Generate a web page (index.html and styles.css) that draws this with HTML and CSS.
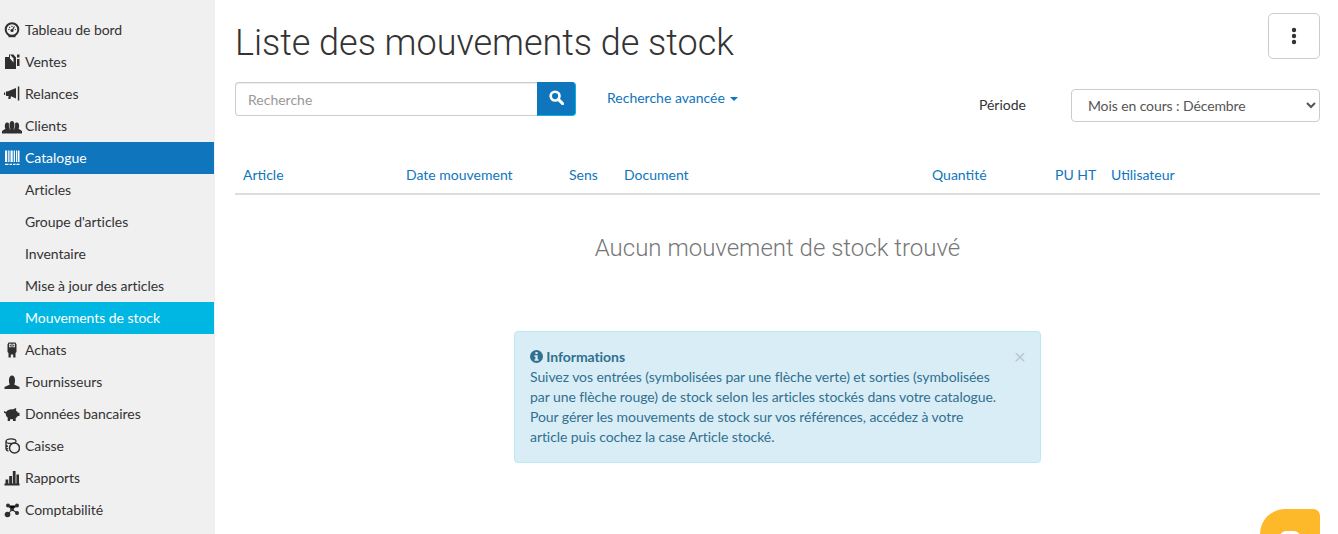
FILE: index.html
```html
<!DOCTYPE html>
<html lang="fr">
<head>
<meta charset="utf-8">
<title>Liste des mouvements de stock</title>
<link rel="stylesheet" href="styles.css">
</head>
<body>
<div class="app">
  <nav class="sidebar">
    <a class="nav-item"><svg class="ico" viewBox="0 0 16 16"><circle cx="8" cy="7.500" r="6.300" fill="none" stroke="currentColor" stroke-width="2"/><circle cx="8" cy="8.500" r="1.600" fill="currentColor"/><path d="M8 8.500l2.500-4M4.300 7.500h1.200M10.800 7.500h1M8 3.800v1.200M5.300 5l.8.8" stroke="currentColor" stroke-width="1.200" fill="none"/><path d="M4.500 13h7v2.200h-7z" fill="currentColor"/></svg>Tableau de bord</a>
    <a class="nav-item"><svg class="ico" viewBox="0 0 16 16"><path d="M1 3h4V0.500h4.500L12 3.500V15H1z" fill="currentColor"/><path d="M13 0.500h2.500v3H13zM13 5h2.500v7H13z" fill="currentColor"/><path d="M6 .5L9.500 4.500v4L6 4.500z" fill="#f0f0f0"/></svg>Ventes</a>
    <a class="nav-item"><svg class="ico" viewBox="0 0 16 16"><path d="M0 6.500h1.200v2.500H0zM2 5.500l2-.2 8-3.300v10.500l-5-2.200-.6 2.700H4.300L4.600 10H2z" fill="currentColor"/><path d="M13.800 .5h1.500v14h-1.500z" fill="currentColor"/></svg>Relances</a>
    <a class="nav-item"><svg class="ico wide" viewBox="0 0 20 16"><path d="M0 15.500v-2.500l3.500-2.200C2.500 9.500 2.400 4.500 5 4.500c1 0 1.700.5 2 1.300-.4 2 0 3.700 1 5.200L4.500 15.500zM20 15.500v-2.500l-3.500-2.200c1-1.300 1.100-6.300-1.500-6.300-1 0-1.700.5-2 1.300.4 2 0 3.700-1 5.200l3.500 4.500z" fill="currentColor"/><path d="M5 15.500V13l3.500-2C7 9 7 3 10 3s3 6 1.500 8l3.500 2v2.500z" fill="currentColor"/></svg>Clients</a>
    <a class="nav-item active"><svg class="ico" viewBox="0 0 16 16"><path d="M1 .5h2.200v11.500H1zM4.200 .5h1.300v11.500H4.200zM6.500 .5h2.200v11.500H6.500zM9.700 .5H11v11.500H9.700zM12 .5h1.300v11.500H12zM14 .5h1.500v11.500H14zM1 13.800h3.500v1.200H1zM5.500 13.800h2.500v1.200H5.500zM9 13.800h2.500v1.200H9zM12.500 13.800h3v1.200h-3z" fill="currentColor"/></svg>Catalogue</a>
    <a class="nav-item sub">Articles</a>
    <a class="nav-item sub">Groupe d'articles</a>
    <a class="nav-item sub">Inventaire</a>
    <a class="nav-item sub">Mise à jour des articles</a>
    <a class="nav-item sub current">Mouvements de stock</a>
    <a class="nav-item"><svg class="ico" viewBox="0 0 16 16"><path d="M4.500 .5h7l1 2v7.500l-1 1V15.500H9.200v-3H6.800v3H4.500V11l-1-1V2.500z" fill="currentColor"/><path d="M5 1.800h2.500v3.400H5zM8.500 1.800H11v3.400H8.500z" fill="#f0f0f0"/><path d="M5.700 2.800h1.100v1.600H5.700zM9.200 2.800h1.100v1.600H9.200z" fill="currentColor"/></svg>Achats</a>
    <a class="nav-item"><svg class="ico" viewBox="0 0 16 16"><path d="M.5 15v-2l5.300-2.400C4.500 8.500 4.300 1.500 8 1.500s3.500 7 2.200 9.100l5.300 2.400v2z" fill="currentColor"/></svg>Fournisseurs</a>
    <a class="nav-item"><svg class="ico" viewBox="0 0 16 16"><path d="M0 5l2 1c1.500-2 4-3 7-2.600 1-.6 2-1.400 3.300-1.200l-.4 2.300c1 .6 1.700 1.300 2 2.300H15.500v3.200h-1.800c-.5 1-1 1.500-2 2V15H9v-1.800H6V15H3.700v-3.500C2.200 10.500 1.700 9 1.700 7.500L0 6.800z" fill="currentColor"/></svg>Données bancaires</a>
    <a class="nav-item"><svg class="ico" viewBox="0 0 16 16"><ellipse cx="7" cy="3.200" rx="5" ry="2.300" fill="none" stroke="currentColor" stroke-width="1.300"/><path d="M2 3.500v7.500c0 1 1 1.800 2.500 2.200M2 6.500c0 1 .8 1.500 2 1.800M2 9.200c0 1 .8 1.500 2 1.800" fill="none" stroke="currentColor" stroke-width="1.300"/><circle cx="10.500" cy="10" r="5" fill="none" stroke="currentColor" stroke-width="1.500"/></svg>Caisse</a>
    <a class="nav-item"><svg class="ico" viewBox="0 0 16 16"><path d="M.5 13.500h15V15.500H.5zM1.500 9.500h2.800v4H1.500zM5.200 6h2.800v7.500H5.200zM8.800 1h2.800v12.500H8.800zM12.400 4.500h2.600v9h-2.600z" fill="currentColor"/></svg>Rapports</a>
    <a class="nav-item"><svg class="ico" viewBox="0 0 16 16"><path d="M3.500 12.500L8 7.500M4 3.500l4 4 5-4M8 7.500l5 3.500" stroke="currentColor" stroke-width="1.100"/><circle cx="3.500" cy="12.500" r="2.800" fill="currentColor"/><circle cx="8" cy="7.500" r="1.800" fill="currentColor"/><circle cx="4" cy="3.500" r="2" fill="currentColor"/><circle cx="13" cy="3.500" r="2" fill="currentColor"/><circle cx="13" cy="11" r="2" fill="currentColor"/></svg>Comptabilité</a>
  </nav>

  <main class="content">
    <header class="page-head">
      <h1>Liste des mouvements de stock</h1>
      <button class="menu-btn" aria-label="Menu"><svg viewBox="0 0 6 18" width="6" height="18"><circle cx="3" cy="3" r="2.200"/><circle cx="3" cy="9" r="2.200"/><circle cx="3" cy="15" r="2.200"/></svg></button>
    </header>

    <section class="filters">
      <div class="search">
        <input class="search-input" type="text" placeholder="Recherche">
        <button class="search-btn" aria-label="Rechercher"><svg viewBox="0 0 16 16" width="15" height="15"><circle cx="6.500" cy="6.500" r="4.700" fill="none" stroke="#fff" stroke-width="2.800"/><path d="M10 10l4.500 4.500" stroke="#fff" stroke-width="3.200" stroke-linecap="round"/></svg></button>
      </div>
      <a class="advanced">Recherche avancée<span class="caret"></span></a>
      <label class="period-label">Période</label>
      <select class="period"><option>Mois en cours : Décembre</option></select>
    </section>

    <div class="table-head">
      <a>Article</a><a>Date mouvement</a><a>Sens</a><a>Document</a><a>Quantité</a><a>PU HT</a><a>Utilisateur</a>
    </div>

    <p class="empty">Aucun mouvement de stock trouvé</p>

    <aside class="alert">
      <span class="close">×</span>
      <strong class="alert-title"><svg viewBox="0 0 14 14" width="13" height="13"><circle cx="7" cy="7" r="7" fill="currentColor"/><rect x="5.800" y="2.200" width="2.400" height="2.200" fill="#d9edf7"/><path d="M4.800 5.600h3.400v4.300h1.100v1.800H4.800V9.900h1V7.400h-1z" fill="#d9edf7"/></svg> Informations</strong>
      Suivez vos entrées (symbolisées par une flèche verte) et sorties (symbolisées<br>
      par une flèche rouge) de stock selon les articles stockés dans votre catalogue.<br>
      Pour gérer les mouvements de stock sur vos références, accédez à votre<br>
      article puis cochez la case Article stocké.
    </aside>
  </main>
</div>
<div class="chat"><span class="chat-inner"></span></div>
</body>
</html>
```
FILE: styles.css
```css
* { box-sizing: border-box; }
html, body { margin: 0; height: 534px; overflow: hidden; }
body { font-family: Lato, "Liberation Sans", sans-serif; font-size: 14px; line-height: 20px; color: #333; background: #fff; position: relative; }
.app { display: flex; height: 534px; }
.sidebar { width: 215px; flex: none; background: #f0f0f0; padding: 14px 1px 0 0; }
.nav-item { display: flex; align-items: center; height: 32px; padding-left: 25px; color: #333; position: relative; letter-spacing: -.04px; }
.nav-item.active { background: #0f75bc; color: #fff; }
.nav-item.current { background: #00b7e3; color: #fff; }
.ico { position: absolute; left: 4px; top: 8px; width: 16px; height: 16px; color: #2f2f2f; }
.ico.wide { left: 2px; width: 20px; }
.active .ico { color: #fff; }
.content { flex: 1; padding: 0 18px 0 20px; min-width: 0; }
.page-head { display: flex; justify-content: space-between; height: 82px; }
h1 { margin: 0; padding-top: 23px; font-family: Roboto, sans-serif; font-weight: 300; font-size: 36px; line-height: 40px; color: #333; letter-spacing: -.03px; }
.menu-btn { margin-top: 13px; width: 52px; height: 46px; background: #fff; border: 1px solid #ccc; border-radius: 5px; padding: 0 1px 0 0; display: flex; align-items: center; justify-content: center; }
.menu-btn svg { fill: #333; }
.filters { display: flex; align-items: flex-start; height: 62px; }
.search { display: flex; width: 341px; height: 34px; }
.search-input { flex: 1; min-width: 0; border: 1px solid #ccc; border-right: 0; border-radius: 4px 0 0 4px; padding: 2px 12px 0; font: 14px/20px Lato, sans-serif; color: #555; box-shadow: inset 0 1px 1px rgba(0,0,0,.075); }
.search-input::placeholder { color: #999; opacity: 1; }
.search-btn { width: 39px; background: #0f75bc; border: 1px solid #0f75bc; border-bottom-color: #00b7e3; border-right-color: #00b7e3; border-radius: 0 4px 4px 0; padding: 0 0 4px; display: flex; align-items: center; justify-content: center; }
.advanced { margin-left: 31px; padding-top: 6px; color: #0f75bc; }
.caret { display: inline-block; margin-left: 5px; vertical-align: middle; border-top: 4px solid #0f75bc; border-left: 4px solid transparent; border-right: 4px solid transparent; }
.period-label { margin-left: 241px; padding-top: 13px; color: #333; }
.period { margin-left: 45px; margin-top: 7px; width: 249px; height: 33px; background: #fff; border: 1px solid #ccc; border-radius: 4px; padding: 0 12px; font: 14px Lato, sans-serif; letter-spacing: -.1px; color: #555; }
.table-head { display: grid; grid-template-columns: 163px 163px 55px 308px 123px 56px 1fr; height: 51px; padding-top: 21px; border-bottom: 2px solid #ddd; }
.table-head a { padding-left: 8px; color: #0f75bc; }
.empty { margin: 0; padding-top: 40px; text-align: center; font-family: Roboto, sans-serif; font-weight: 300; font-size: 24px; line-height: 26px; color: #777; height: 136px; }
.alert { position: relative; width: 527px; height: 132px; margin-left: 279px; padding: 15px; background: #d9edf7; border: 1px solid #bce8f1; border-radius: 4px; color: #31708f; letter-spacing: -.07px; }
.alert-title { display: block; font-weight: 700; }
.alert-title svg { vertical-align: -1px; }
.close { position: absolute; right: 14px; top: 14px; font-size: 21px; line-height: 22px; color: #000; opacity: .15; font-family: "Liberation Sans", sans-serif; }
.chat { position: absolute; left: 1260px; top: 509px; width: 60px; height: 25px; overflow: hidden; background: #fdb92a; border-radius: 30px 8px 0 0; display: flex; justify-content: center; padding-top: 22px; }
.chat-inner { width: 20px; height: 14px; flex: none; background: #fff; border-radius: 6px; }
```
